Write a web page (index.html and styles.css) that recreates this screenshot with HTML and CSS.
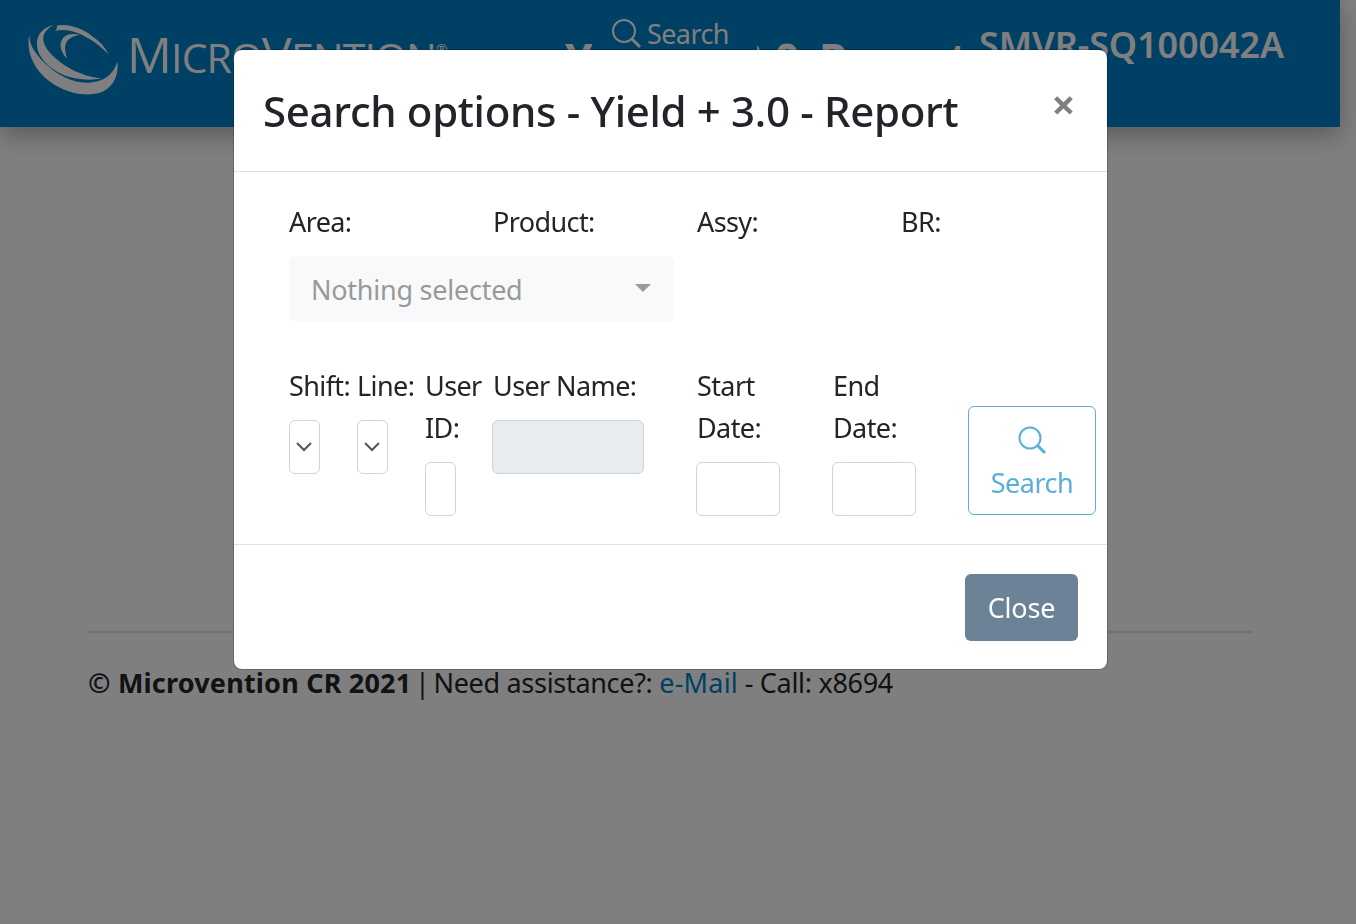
FILE: index.html
```html
<!DOCTYPE html>
<html lang="en">
<head>
  <meta charset="UTF-8" />
  <title>Yield + 3.0 - Report</title>
  <link rel="stylesheet" href="styles.css">
</head>
<body>
  <header class="topbar">
    <div class="logo">
      <svg class="logo-mark" width="92" height="72" viewBox="24 27 276 216" fill="#fff">
        <path d="M28 60C18 100 35 160 90 200C135 232 190 245 235 235C275 225 298 185 292 140C280 180 250 200 205 203C160 205 110 180 75 145C45 115 28 90 28 60Z"/>
        <path d="M100 30C65 38 45 65 52 100C60 140 110 180 165 190C195 196 225 195 245 190C205 188 160 170 125 145C85 115 62 85 72 58C78 46 88 36 100 30Z"/>
        <path d="M110 32C145 25 185 40 215 62C240 80 258 98 265 118C240 92 210 70 175 55C150 45 125 42 105 48C112 42 112 36 110 32Z"/>
        <path d="M180 60C150 52 128 60 122 85C120 105 130 120 142 132C135 110 132 95 140 80C148 68 165 62 180 60Z"/>
      </svg>
      <span class="logo-text">M<small>ICRO</small>V<small>ENTION</small><sup>®</sup></span>
    </div>
    <h1 class="report-title">Yield + 3.0 Report</h1>
    <a class="top-search" href="#">
      <svg width="30" height="30" viewBox="0 0 30 30" fill="none" stroke="#fff" stroke-width="2"><circle cx="13" cy="12" r="11"/><path d="M21 20l8 8" stroke-width="3"/></svg>
      Search
    </a>
    <div class="part-no">SMVR-SQ100042A</div>
  </header>

  <main class="page">
    <hr class="rule">
    <p class="foot"><b>© Microvention CR 2021</b><span class="sep"> | </span>Need assistance?: <a href="#">e-Mail</a> - Call: x8694</p>
  </main>

  <div class="backdrop"></div>
  <div class="modal">
    <div class="modal-header">
      <h5 class="modal-title">Search options - Yield + 3.0 - Report</h5>
      <span class="close">×</span>
    </div>
    <div class="modal-body">
      <div class="row">
        <div class="col-3">
          <label>Area:</label>
          <div class="picker">Nothing selected<i class="caret"></i></div>
        </div>
        <div class="col-3"><label>Product:</label></div>
        <div class="col-3"><label>Assy:</label></div>
        <div class="col-3"><label>BR:</label></div>
      </div>
      <div class="row row-second">
        <div class="col-1"><label>Shift:</label><select class="field"></select></div>
        <div class="col-1"><label>Line:</label><select class="field"></select></div>
        <div class="col-1"><label>User ID:</label><input class="field"></div>
        <div class="col-3"><label>User Name:</label><input class="field field-off" disabled></div>
        <div class="col-2"><label>Start Date:</label><input class="field"></div>
        <div class="col-2"><label>End Date:</label><input class="field"></div>
        <div class="col-2">
          <button class="btn-search">
            <svg width="30" height="30" viewBox="0 0 30 30" fill="none" stroke="currentColor" stroke-width="2"><circle cx="13" cy="12" r="10.5"/><path d="M20.5 19.5l7.5 7.5" stroke-width="3"/></svg>
            <span>Search</span>
          </button>
        </div>
      </div>
    </div>
    <div class="modal-footer">
      <button class="btn-close">Close</button>
    </div>
  </div>
</body>
</html>
```

FILE: styles.css
```css
* {
  box-sizing: border-box;
}
body {
  margin: 0;
  min-height: 924px;
  font-family: "Noto Sans", sans-serif;
  font-size: 27px;
  line-height: 42px;
  letter-spacing: -.6px;
  color: #212529;
  background: #fff;
}
.topbar {
  width: 1340px;
  height: 127px;
  background: #0080ca;
  color: #fff;
  display: flex;
  box-shadow: 0 8px 24px rgba(0, 0, 0, .3);
  position: relative;
}
.logo {
  display: flex;
  align-items: flex-start;
  width: 565px;
  padding: 24px 0 0 28px;
}
.logo-text {
  margin: 0 0 0 7px;
  font-family: "Open Sans", sans-serif;
  font-size: 50px;
  line-height: 60px;
  letter-spacing: -.9px;
  white-space: nowrap;
}
.logo-text small {
  font-size: 41px;
}
.logo-text sup {
  font-size: 14px;
  line-height: 0;
}
.report-title {
  margin: 29px 0 0;
  width: 386px;
  font-size: 44px;
  line-height: 60px;
  letter-spacing: 0;
  word-spacing: 8px;
  white-space: nowrap;
}
.top-search {
  position: absolute;
  left: 592px;
  top: 0;
  width: 165px;
  height: 50px;
  padding: 18px 0 0 19px;
  display: flex;
  align-items: center;
  gap: 6px;
  background: #0080ca;
  color: #fff;
  text-decoration: none;
}
.part-no {
  margin: 20px 0 0 28px;
  font-size: 36px;
  line-height: 50px;
  letter-spacing: -.1px;
  font-weight: 600;
}
.page {
  padding: 0 104px 0 88px;
}
.rule {
  margin: 504px 0 0;
  border: 0;
  border-top: 2px solid rgba(0, 0, 0, .1);
}
.foot {
  margin: 29px 0 0;
  letter-spacing: -.3px;
}
.foot b {
  letter-spacing: .2px;
}
.foot .sep {
  word-spacing: -3px;
}
.foot a {
  color: #0080ca;
  text-decoration: none;
  letter-spacing: .2px;
}
.backdrop {
  position: fixed;
  inset: 0;
  background: rgba(0, 0, 0, .5);
}
.modal {
  position: fixed;
  left: 234px;
  top: 50px;
  width: 873px;
  height: 619px;
  background: #fff;
  border-radius: 8px;
  box-shadow: 0 0 0 1px rgba(0, 0, 0, .2);
}
.modal-header {
  height: 122px;
  padding: 31px 29px 0;
  display: flex;
  justify-content: space-between;
  border-bottom: 1px solid #dee2e6;
}
.modal-title {
  margin: 0;
  font-size: 42px;
  line-height: 60px;
  letter-spacing: -.32px;
  font-weight: 500;
}
.close {
  margin: -2px 3px 0 0;
  font-size: 42px;
  line-height: 50px;
  font-weight: 700;
  color: #808080;
}
.modal-body {
  height: 372px;
  padding: 29px 11px 0 40px;
}
.row {
  display: flex;
}
.row-second {
  margin-top: 43px;
}
.col-1 {
  width: 68px;
  padding: 0 15px;
}
.col-2 {
  width: 136px;
  padding: 0 15px;
}
.col-3 {
  width: 204px;
  padding: 0 15px;
}
label {
  display: block;
  margin-bottom: 13px;
}
.picker {
  width: 385px;
  height: 66px;
  border-radius: 8px;
  background: #f8f9fa;
  color: #999;
  line-height: 68px;
  letter-spacing: -.25px;
  padding: 0 22px;
  position: relative;
}
.caret {
  position: absolute;
  right: 23px;
  top: 28px;
  border: 8px solid transparent;
  border-top-color: #999;
  border-bottom: 0;
}
.field {
  display: block;
  height: 54px;
  width: 100%;
  border: 1px solid #ced4da;
  border-radius: 6px;
  background: #fff;
  padding: 0;
}
select.field {
  appearance: none;
  width: 31px;
  background: #fff url("data:image/svg+xml,%3Csvg xmlns='http://www.w3.org/2000/svg' viewBox='0 0 16 16'%3E%3Cpath fill='none' stroke='%23555' stroke-width='2' d='M1 4l7 7 7-7'/%3E%3C/svg%3E") no-repeat 6px 18px / 16px 16px;
}
.col-1 input.field {
  width: 31px;
}
.col-2 .field {
  width: 84px;
  margin-left: -1px;
}
.col-3 .field {
  width: 152px;
  margin-left: -1px;
}
.field-off {
  background: #e9ecef;
}
.btn-search {
  display: flex;
  flex-direction: column;
  align-items: center;
  justify-content: center;
  width: 128px;
  height: 109px;
  margin: 41px 0 0 -1px;
  padding: 8px 0 0;
  border: 1px solid #5aaedc;
  border-radius: 6px;
  background: #fff;
  color: #5aaedc;
  font: inherit;
  letter-spacing: -.5px;
}
.btn-search svg {
  margin-bottom: 6px;
}
.modal-footer {
  display: flex;
  justify-content: flex-end;
  padding: 29px 29px 0;
  border-top: 1px solid #dee2e6;
}
.btn-close {
  width: 113px;
  height: 67px;
  border: 0;
  border-radius: 6px;
  background: #6c8296;
  color: #fff;
  font: inherit;
  letter-spacing: -.2px;
}
```
